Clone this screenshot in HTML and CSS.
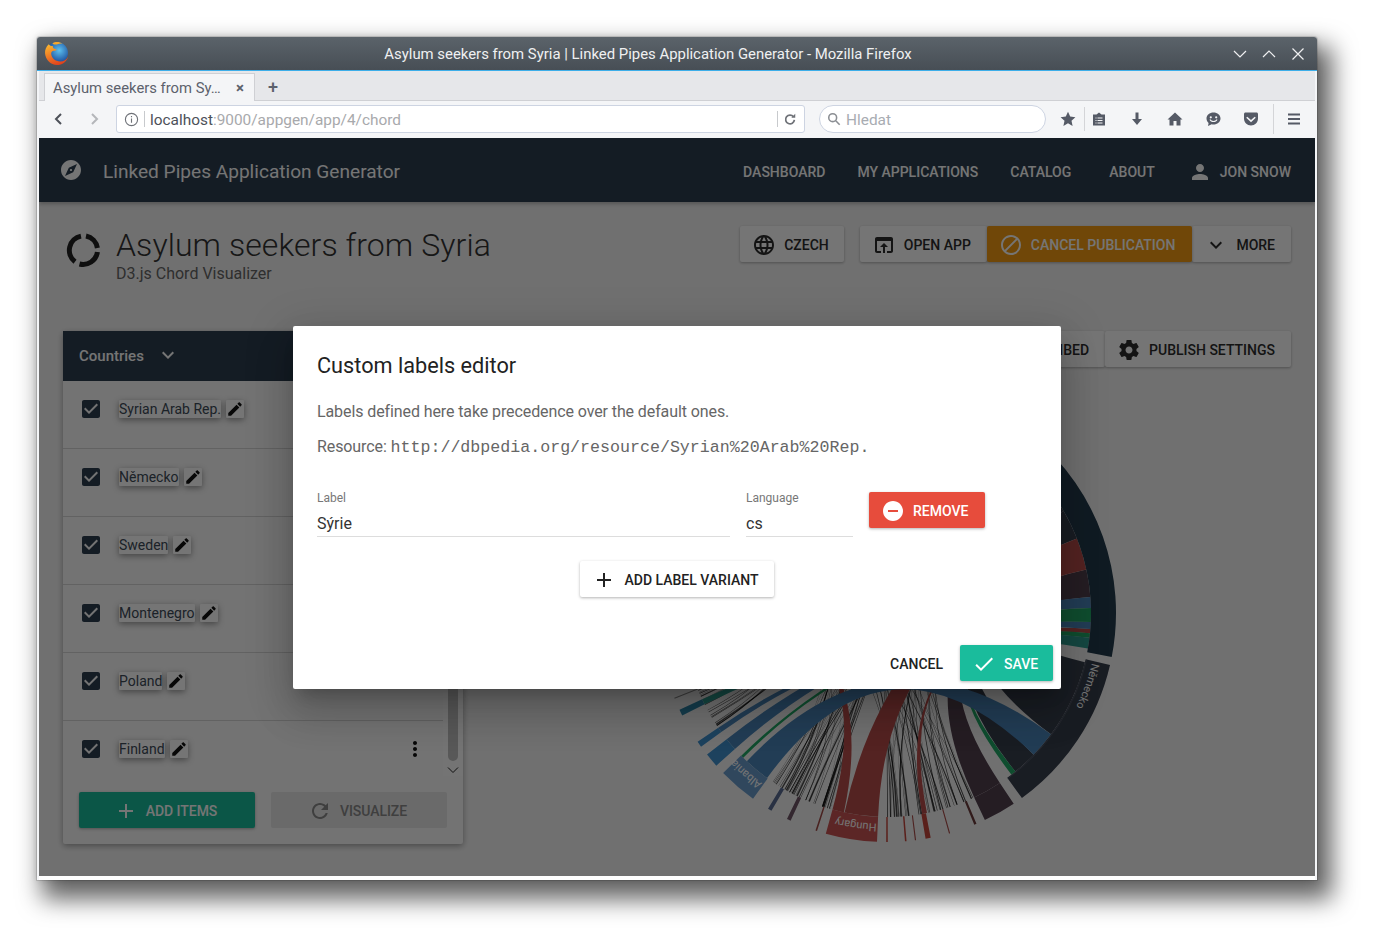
FILE: index.html
```html
<!DOCTYPE html>
<html lang="cs">
<head>
<meta charset="utf-8">
<title>Asylum seekers from Syria | Linked Pipes Application Generator - Mozilla Firefox</title>
<link rel="stylesheet" href="styles.css">
</head>
<body>
<svg class="defs" width="0" height="0" aria-hidden="true">
  <symbol id="i-globe" viewBox="0 0 24 24"><path d="M11.99 2C6.47 2 2 6.48 2 12s4.47 10 9.99 10C17.52 22 22 17.52 22 12S17.52 2 11.99 2zm6.93 6h-2.95c-.32-1.25-.78-2.45-1.38-3.56 1.84.63 3.37 1.91 4.33 3.56zM12 4.04c.83 1.2 1.48 2.53 1.91 3.96h-3.82c.43-1.43 1.08-2.76 1.91-3.96zM4.26 14C4.1 13.36 4 12.69 4 12s.1-1.36.26-2h3.38c-.08.66-.14 1.32-.14 2 0 .68.06 1.34.14 2H4.26zm.82 2h2.95c.32 1.25.78 2.45 1.38 3.56-1.84-.63-3.37-1.9-4.33-3.56zm2.95-8H5.08c.96-1.66 2.49-2.93 4.33-3.56C8.81 5.55 8.35 6.75 8.03 8zM12 19.96c-.83-1.2-1.48-2.53-1.91-3.96h3.82c-.43 1.43-1.08 2.76-1.91 3.96zM14.34 14H9.66c-.09-.66-.16-1.32-.16-2 0-.68.07-1.35.16-2h4.68c.09.65.16 1.32.16 2 0 .68-.07 1.34-.16 2zm.25 5.56c.6-1.11 1.06-2.31 1.38-3.56h2.95c-.96 1.65-2.49 2.93-4.33 3.56zM16.36 14c.08-.66.14-1.32.14-2 0-.68-.06-1.34-.14-2h3.38c.16.64.26 1.31.26 2s-.1 1.36-.26 2h-3.38z"/></symbol>
  <symbol id="i-open" viewBox="0 0 24 24"><path d="M19 4H5c-1.11 0-2 .9-2 2v12c0 1.1.89 2 2 2h4v-2H5V8h14v10h-4v2h4c1.1 0 2-.9 2-2V6c0-1.1-.89-2-2-2zm-7 6l-4 4h3v6h2v-6h3l-4-4z"/></symbol>
  <symbol id="i-block" viewBox="0 0 24 24"><path d="M12 2C6.48 2 2 6.48 2 12s4.48 10 10 10 10-4.48 10-10S17.52 2 12 2zM4 12c0-4.42 3.58-8 8-8 1.85 0 3.55.63 4.9 1.69L5.69 16.9C4.63 15.55 4 13.85 4 12zm8 8c-1.85 0-3.55-.63-4.9-1.69L18.31 7.1C19.37 8.45 20 10.15 20 12c0 4.42-3.58 8-8 8z"/></symbol>
  <symbol id="i-more" viewBox="0 0 24 24"><path d="M16.59 8.59L12 13.17 7.41 8.59 6 10l6 6 6-6z"/></symbol>
  <symbol id="i-gear" viewBox="0 0 24 24"><path d="M19.43 12.98c.04-.32.07-.64.07-.98s-.03-.66-.07-.98l2.11-1.65c.19-.15.24-.42.12-.64l-2-3.46c-.12-.22-.39-.3-.61-.22l-2.49 1c-.52-.4-1.08-.73-1.69-.98l-.38-2.65C14.46 2.18 14.25 2 14 2h-4c-.25 0-.46.18-.49.42l-.38 2.65c-.61.25-1.17.59-1.69.98l-2.49-1c-.23-.09-.49 0-.61.22l-2 3.46c-.13.22-.07.49.12.64l2.11 1.65c-.04.32-.07.65-.07.98s.03.66.07.98l-2.11 1.65c-.19.15-.24.42-.12.64l2 3.46c.12.22.39.3.61.22l2.49-1c.52.4 1.08.73 1.69.98l.38 2.65c.03.24.24.42.49.42h4c.25 0 .46-.18.49-.42l.38-2.65c.61-.25 1.17-.59 1.69-.98l2.49 1c.23.09.49 0 .61-.22l2-3.46c.12-.22.07-.49-.12-.64l-2.11-1.65zM12 15.5c-1.93 0-3.5-1.57-3.5-3.5s1.57-3.5 3.5-3.5 3.5 1.57 3.5 3.5-1.57 3.5-3.5 3.5z"/></symbol>
  <symbol id="i-edit" viewBox="0 0 24 24"><path d="M3 17.25V21h3.75L17.81 9.94l-3.75-3.75L3 17.25zM20.71 7.04c.39-.39.39-1.02 0-1.41l-2.34-2.34c-.39-.39-1.02-.39-1.41 0l-1.83 1.83 3.75 3.75 1.83-1.83z"/></symbol>
  <symbol id="i-add" viewBox="0 0 24 24"><path d="M19 13h-6v6h-2v-6H5v-2h6V5h2v6h6v2z"/></symbol>
  <symbol id="i-person" viewBox="0 0 24 24"><path d="M12 12c2.21 0 4-1.79 4-4s-1.79-4-4-4-4 1.79-4 4 1.79 4 4 4zm0 2c-2.67 0-8 1.34-8 4v2h16v-2c0-2.66-5.33-4-8-4z"/></symbol>
  <symbol id="i-check" viewBox="0 0 24 24"><path d="M9 16.17L4.83 12l-1.42 1.41L9 19 21 7l-1.41-1.41z"/></symbol>
  <symbol id="i-refresh" viewBox="0 0 24 24"><path d="M17.65 6.35C16.2 4.9 14.21 4 12 4c-4.42 0-7.99 3.58-7.99 8s3.57 8 7.99 8c3.73 0 6.84-2.55 7.73-6h-2.08c-.82 2.33-3.04 4-5.65 4-3.31 0-6-2.69-6-6s2.69-6 6-6c1.66 0 3.14.69 4.22 1.78L13 11h7V4l-2.35 2.35z"/></symbol>
  <symbol id="i-vert" viewBox="0 0 24 24"><path d="M12 8c1.1 0 2-.9 2-2s-.9-2-2-2-2 .9-2 2 .9 2 2 2zm0 2c-1.1 0-2 .9-2 2s.9 2 2 2 2-.9 2-2-.9-2-2-2zm0 6c-1.1 0-2 .9-2 2s.9 2 2 2 2-.9 2-2-.9-2-2-2z"/></symbol>
  <symbol id="i-remove" viewBox="0 0 24 24"><path d="M12 2C6.48 2 2 6.48 2 12s4.48 10 10 10 10-4.48 10-10S17.52 2 12 2zm5 11H7v-2h10v2z"/></symbol>
  <symbol id="i-compass" viewBox="0 0 24 24"><path d="M12 10.9c-.61 0-1.1.49-1.1 1.1s.49 1.1 1.1 1.1c.61 0 1.1-.49 1.1-1.1s-.49-1.1-1.1-1.1zM12 2C6.48 2 2 6.48 2 12s4.48 10 10 10 10-4.48 10-10S17.52 2 12 2zm2.19 12.19L6 18l3.81-8.19L18 6l-3.81 8.19z"/></symbol>
  <symbol id="i-box" viewBox="0 0 24 24"><path d="M19 3H5c-1.11 0-2 .9-2 2v14c0 1.1.89 2 2 2h14c1.11 0 2-.9 2-2V5c0-1.1-.89-2-2-2zm-9 14l-5-5 1.41-1.41L10 14.17l7.59-7.59L19 8l-9 9z"/></symbol>
</svg>

<div class="window">
  <div class="titlebar">
    <svg class="fx-logo" viewBox="0 0 24 24">
      <defs>
        <radialGradient id="fxb" cx="60%" cy="38%" r="55%"><stop offset="0" stop-color="#5cc0ee"/><stop offset="1" stop-color="#1d4f9e"/></radialGradient>
        <linearGradient id="fxo" x1="0.2" y1="0" x2="0.6" y2="1"><stop offset="0" stop-color="#fbb62f"/><stop offset="1" stop-color="#df3f1c"/></linearGradient>
      </defs>
      <circle cx="12.500" cy="11.500" r="10.500" fill="url(#fxb)"/>
      <path d="M4.500 3C2 5.300.8 8.400 1 11.800 1.400 18 6.400 23 12.500 23c5 0 9.400-3.300 10.700-8-1.500 2.800-4.300 4.600-7.600 4.600-4.700 0-8.400-3.300-8.700-7.400-.1-1.500.9-2.500 2.400-2.800 1.300-.2 2.400-.2 3-1-.9-.7-2-.8-2.900-1.300-.7-.4-.9-1.200-.9-2.200C7 4.700 5.200 4.300 4.500 3z" fill="url(#fxo)"/>
      <path d="M8 2.300C9.300 1.400 10.800 1 12.500 1c2 0 3.800.5 5.300 1.500-1.800-.2-3.400 0-4.800.6C11.300 3.800 9.500 3.500 8 2.300z" fill="#f7a72a"/>
    </svg>
    <span class="title-text">Asylum seekers from Syria | Linked Pipes Application Generator - Mozilla Firefox</span>
    <div class="win-controls">
      <svg viewBox="0 0 14 14"><path d="M1 4l6 6 6-6"/></svg>
      <svg viewBox="0 0 14 14"><path d="M1 10l6-6 6 6"/></svg>
      <svg viewBox="0 0 14 14"><path d="M1.500 1.500l11 11M12.500 1.500l-11 11"/></svg>
    </div>
  </div>

  <div class="tabbar">
    <div class="tab">
      <span class="tab-title">Asylum seekers from Sy…</span>
      <span class="tab-close">×</span>
    </div>
    <span class="tab-new">+</span>
  </div>

  <div class="navbar">
    <svg class="nav-arrow" viewBox="0 0 12 14"><path d="M9 2L4 7l5 5"/></svg>
    <svg class="nav-arrow off" viewBox="0 0 12 14"><path d="M3 2l5 5-5 5"/></svg>
    <div class="urlbar">
      <svg class="url-info" viewBox="0 0 16 16"><circle cx="8" cy="8" r="6.500"/><path d="M8 7v4.500M8 4.200v1.500"/></svg>
      <span class="url-sep"></span>
      <span class="url-text">localhost<span class="url-dim">:9000/appgen/app/4/chord</span></span>
      <span class="url-sep end"></span>
      <svg class="url-reload" viewBox="0 0 16 16"><path d="M12 5.500A5 5 0 1 0 13 9"/><path class="solid" d="M9.500 6.500H14V2z"/></svg>
    </div>
    <div class="searchbar">
      <svg class="search-ic" viewBox="0 0 16 16"><circle cx="6.500" cy="6.500" r="4.500"/><path d="M10 10l4.500 4.500"/></svg>
      <span>Hledat</span>
    </div>
    <div class="tools">
      <svg class="tool star" viewBox="0 0 16 16"><path d="M8 .8l2.200 4.800 5.200.6-3.900 3.500 1.100 5.200L8 12.300l-4.600 2.600 1.100-5.200L.6 6.200l5.200-.6z"/></svg>
      <span class="tool-sep"></span>
      <svg class="tool" viewBox="0 0 16 16"><path fill-rule="evenodd" d="M8 1.500l2.500 2H14v11H2v-11h3.500zM4.500 6.500v1h1v-1zm2 0v1h5v-1zm-2 2.500v1h1V9zm2 0v1h5V9zm-2 2.500v1h1v-1zm2 0v1h5v-1z"/></svg>
      <svg class="tool" viewBox="0 0 16 16"><path d="M6.500 1.500h3V8H13l-5 6-5-6h3.500z"/></svg>
      <svg class="tool" viewBox="0 0 16 16"><path d="M8 1.500L15.500 8.500H13.500V14.500H9.500V10H6.500V14.500H2.500V8.500H.5z"/></svg>
      <svg class="tool" viewBox="0 0 16 16"><path fill-rule="evenodd" d="M8.500 1.500c3.900 0 7 2.600 7 6s-3.100 6-7 6c-.6 0-1.200-.1-1.800-.2L3 15l.6-3.100C2.300 10.800 1.500 9.300 1.500 7.500c0-3.400 3.100-6 7-6zM5.800 5.200a1.100 1.100 0 1 0 0 2.200 1.100 1.100 0 0 0 0-2.200zm5.400 0a1.100 1.100 0 1 0 0 2.200 1.100 1.100 0 0 0 0-2.200zM4.500 8.700c.7 1.500 2.200 2.400 4 2.400s3.300-.9 4-2.400l-1-.4c-.6 1-1.700 1.700-3 1.700s-2.400-.7-3-1.700z"/></svg>
      <svg class="tool tool-last" viewBox="0 0 16 16"><path fill-rule="evenodd" d="M2.500 1.500h11c.8 0 1.500.7 1.500 1.500v4.500c0 3.900-3.100 7-7 7s-7-3.100-7-7V3c0-.8.700-1.500 1.500-1.500zM4.300 5.700L3.200 6.800 8 11.200l4.800-4.400-1.100-1.100L8 9z"/></svg>
      <span class="tool-sep tall"></span>
      <svg class="tool burger" viewBox="0 0 16 16"><path d="M2 2.500h12v2H2zM2 7h12v2H2zM2 11.500h12v2H2z"/></svg>
    </div>
  </div>

  <div class="app">
    <header class="appbar">
      <svg class="ic brand-ic"><use href="#i-compass"/></svg>
      <span class="brand">Linked Pipes Application Generator</span>
      <nav class="menu">
        <a class="menu-item m-dash">DASHBOARD</a>
        <a class="menu-item m-apps">MY APPLICATIONS</a>
        <a class="menu-item m-cat">CATALOG</a>
        <a class="menu-item m-about">ABOUT</a>
        <a class="menu-item m-user"><svg class="ic"><use href="#i-person"/></svg>JON SNOW</a>
      </nav>
    </header>

    <main class="page">
      <section class="head">
        <svg class="chord-logo" viewBox="0 0 34 34">
          <path d="M15 3.100A14.500 14.500 0 0 0 9 28.800"/>
          <path d="M13.500 31A14.500 14.500 0 0 0 31.400 19"/>
          <path d="M31.400 15A14.500 14.500 0 0 0 20 3"/>
        </svg>
        <div class="head-text">
          <h1>Asylum seekers from Syria</h1>
          <p>D3.js Chord Visualizer</p>
        </div>
        <div class="head-actions">
          <button class="btn btn-czech"><svg class="ic"><use href="#i-globe"/></svg>CZECH</button>
          <div class="btn-group">
            <button class="btn"><svg class="ic"><use href="#i-open"/></svg>OPEN APP</button>
            <button class="btn btn-amber"><svg class="ic"><use href="#i-block"/></svg>CANCEL PUBLICATION</button>
            <button class="btn"><svg class="ic"><use href="#i-more"/></svg>MORE</button>
          </div>
        </div>
      </section>

      <section class="main">
        <aside class="card">
          <div class="card-head">
            <span>Countries</span>
            <svg class="ic"><use href="#i-more"/></svg>
          </div>
          <div class="rows">
            <div class="row"><svg class="ic box"><use href="#i-box"/></svg><span class="chip">Syrian Arab Rep.</span><span class="chip-edit"><svg class="ic"><use href="#i-edit"/></svg></span></div>
            <div class="row"><svg class="ic box"><use href="#i-box"/></svg><span class="chip">Německo</span><span class="chip-edit"><svg class="ic"><use href="#i-edit"/></svg></span></div>
            <div class="row"><svg class="ic box"><use href="#i-box"/></svg><span class="chip">Sweden</span><span class="chip-edit"><svg class="ic"><use href="#i-edit"/></svg></span></div>
            <div class="row"><svg class="ic box"><use href="#i-box"/></svg><span class="chip">Montenegro</span><span class="chip-edit"><svg class="ic"><use href="#i-edit"/></svg></span></div>
            <div class="row"><svg class="ic box"><use href="#i-box"/></svg><span class="chip">Poland</span><span class="chip-edit"><svg class="ic"><use href="#i-edit"/></svg></span></div>
            <div class="row"><svg class="ic box"><use href="#i-box"/></svg><span class="chip">Finland</span><span class="chip-edit"><svg class="ic"><use href="#i-edit"/></svg></span><svg class="ic vert"><use href="#i-vert"/></svg></div>
            <div class="scroll-track">
              <span class="scroll-thumb"></span>
              <svg class="scroll-down" viewBox="0 0 12 8"><path d="M1 1.500l5 5 5-5"/></svg>
            </div>
          </div>
          <div class="card-actions">
            <button class="wide wide-add"><svg class="ic"><use href="#i-add"/></svg>ADD ITEMS</button>
            <button class="wide wide-off"><svg class="ic"><use href="#i-refresh"/></svg>VISUALIZE</button>
          </div>
        </aside>

        <div class="viz">
          <div class="viz-actions">
            <button class="btn">SUBSCRIBED</button>
            <button class="btn btn-publish"><svg class="ic"><use href="#i-gear"/></svg>PUBLISH SETTINGS</button>
          </div>
          <svg id="chord" class="chord" width="480" height="480" viewBox="-240 -240 480 480"></svg>
        </div>
      </section>
    </main>

    <div class="overlay">
      <div class="dialog">
        <h2>Custom labels editor</h2>
        <p class="dlg-line">Labels defined here take precedence over the default ones.</p>
        <p class="dlg-line res">Resource: <code>http://dbpedia.org/resource/Syrian%20Arab%20Rep.</code></p>
        <div class="variant">
          <label class="field f-label"><span>Label</span><b>Sýrie</b></label>
          <label class="field f-lang"><span>Language</span><b>cs</b></label>
          <button class="btn btn-red"><svg class="ic"><use href="#i-remove"/></svg>REMOVE</button>
        </div>
        <div class="add-row">
          <button class="btn btn-white"><svg class="ic"><use href="#i-add"/></svg>ADD LABEL VARIANT</button>
        </div>
        <div class="dlg-foot">
          <button class="link-btn">CANCEL</button>
          <button class="btn btn-teal"><svg class="ic"><use href="#i-check"/></svg>SAVE</button>
        </div>
      </div>
    </div>
  </div>
</div>
<script src="chord.js"></script>
</body>
</html>
```

FILE: styles.css
```css
* { box-sizing: border-box; }
html, body { margin: 0; height: 100%; background: #fff; overflow: hidden; }
body { font-family: Roboto, "Liberation Sans", sans-serif; padding: 37px 0 0 37px; }
.defs { position: absolute; }
button { font-family: inherit; border: 0; cursor: default; }
.ic { width: 24px; height: 24px; fill: currentColor; flex: none; display: block; }

.window { width: 1280px; height: 843px; display: flex; flex-direction: column; background: #fff; border: 2px solid #f4f5f7; border-top: 0; border-bottom: 0; border-radius: 3px 3px 0 0; box-shadow: 0 0 0 1px rgba(0,0,0,.12), 10px 14px 24px 5px rgba(0,0,0,.62), 0 0 6px rgba(0,0,0,.14); }

.titlebar { height: 34px; flex: none; margin: 0 -2px; background: linear-gradient(#5b636a, #474e55); border-bottom: 1px solid #3daee9; border-radius: 3px 3px 0 0; display: flex; align-items: center; justify-content: center; position: relative; color: #eff0f1; font-size: 14.900px; font-weight: 400; }
.fx-logo { position: absolute; left: 7px; top: 4px; width: 25px; height: 25px; }
.title-text { margin-right: 58px; }
.win-controls { position: absolute; right: 12px; top: 10px; display: flex; gap: 15px; }
.win-controls svg { width: 14px; height: 14px; fill: none; stroke: #eff0f1; stroke-width: 1.2; }

.tabbar { height: 30px; flex: none; background: #e6e7ea; border-bottom: 1px solid #cfd0d4; padding: 2px 0 0 5px; display: flex; align-items: stretch; }
.tab { width: 211px; margin-bottom: -1px; background: #f4f5f7; border: 1px solid #cfd0d4; border-bottom: 0; padding: 0 10px 0 8px; display: flex; align-items: center; justify-content: space-between; font-size: 14.800px; color: #5c616c; }
.tab-close { font-size: 15px; font-weight: 700; color: #5c616c; }
.tab-new { width: 36px; text-align: center; font-size: 18px; font-weight: 500; line-height: 27px; color: #5c616c; }

.navbar { height: 37px; flex: none; background: #f4f5f7; display: flex; align-items: center; padding: 0 0 1px 13px; }
.nav-arrow { width: 12px; height: 14px; fill: none; stroke: #4d5159; stroke-width: 2; flex: none; margin-right: 25px; }
.nav-arrow.off { stroke: #b4b6ba; margin-right: 15px; }
.urlbar { width: 689px; height: 28px; background: #fff; border: 1px solid #cdd4e2; border-radius: 3px; display: flex; align-items: center; padding-left: 7px; font-size: 15.400px; color: #4d5159; }
.url-info { width: 15px; height: 15px; fill: none; stroke: #6f7278; stroke-width: 1.200; flex: none; }
.url-sep { width: 1px; height: 16px; background: #c8cacd; margin: 0 5px 0 5px; flex: none; }
.url-text { flex: 1; white-space: nowrap; padding-top: 2px; }
.url-dim { color: #a8a9ac; }
.url-sep.end { margin: 0 5px 0 0; }
.url-reload { width: 14px; height: 14px; margin-right: 7px; fill: none; stroke: #6f7278; stroke-width: 2; flex: none; }
.url-reload .solid { fill: #6f7278; stroke: none; }
.searchbar { width: 227px; height: 28px; margin-left: 14px; background: #fff; border: 1px solid #cdd4e2; border-radius: 14px; display: flex; align-items: center; padding-left: 7px; gap: 5px; font-size: 15.400px; color: #a8acb2; }
.searchbar span { padding-top: 2px; }
.search-ic { width: 14px; height: 14px; fill: none; stroke: #8b8e93; stroke-width: 1.800; }
.tools { display: flex; align-items: center; margin-left: 14px; }
.tool { width: 16px; height: 16px; fill: #555a66; flex: none; margin-right: 22px; }
.tool.star { margin-right: 8px; }
.tool-sep { width: 1px; height: 24px; background: #d4d5d8; margin-right: 6px; }
.tool.tool-last { margin-right: 14px; }
.tool-sep.tall { height: 30px; margin: 0 12px 0 0; }
.tool.burger { margin-right: 0; }

.app { flex: 1; margin-bottom: 4px; position: relative; background: #f5f5f5; display: flex; flex-direction: column; overflow: hidden; }
.appbar { height: 64px; flex: none; background: #2c3e50; color: #fff; display: flex; align-items: center; padding: 0 24px 0 20px; box-shadow: 0 2px 4px rgba(0,0,0,.25); }
.brand-ic { width: 24px; height: 24px; margin-right: 20px; color: #fff; }
.brand { font-size: 19.100px; padding-top: 2px; }
.menu { margin-left: auto; display: flex; align-items: center; font-size: 14px; font-weight: 500; padding-top: 4px; }
.menu-item { display: flex; align-items: center; }
.m-apps { margin-left: 32px; }
.m-cat { margin-left: 32px; }
.m-about { margin-left: 38px; }
.m-user { margin-left: 33px; }
.m-user .ic { margin-right: 8px; }

.page { flex: 1; padding: 24px 24px 0; display: flex; flex-direction: column; }
.head { display: flex; height: 105px; flex: none; }
.chord-logo { width: 34px; height: 34px; margin: 7px 16px 0 3px; fill: none; stroke: #222; stroke-width: 5; flex: none; }
.head-text h1 { margin: 0; font-size: 32px; font-weight: 300; line-height: 38px; color: #333; letter-spacing: .08px; }
.head-text p { margin: 0; font-size: 16px; line-height: 20px; color: #666; }
.head-actions { margin-left: auto; display: flex; gap: 16px; align-items: flex-start; }
.btn-group { display: flex; }
.btn { height: 36px; padding: 2px 16px 0 12px; background: #fff; color: #2c2c2c; font-size: 14px; font-weight: 500; display: flex; align-items: center; gap: 8px; border-radius: 2px; box-shadow: 0 1px 3px rgba(0,0,0,.3); white-space: nowrap; }
.btn-czech { padding-right: 15px; }
.btn-amber { background: #f39c12; color: #fff; padding-right: 17px; position: relative; }

.main { display: flex; gap: 24px; flex: 1; align-items: flex-start; }
.card { width: 400px; flex: none; background: #fafafa; border-radius: 2px; box-shadow: 0 2px 6px rgba(0,0,0,.35); }
.card-head { height: 50px; background: #2c3e50; color: #fff; font-size: 15px; font-weight: 500; display: flex; align-items: center; padding-left: 16px; gap: 12px; }
.card-head .ic { margin-top: -2px; }
.rows { height: 395px; overflow: hidden; position: relative; }
.row { height: 68px; border-bottom: 1px solid #d5d5d5; padding: 16px 36px 0 16px; display: flex; align-items: flex-start; }
.box { color: #2c3e50; margin-right: 16px; }
.chip { height: 18px; margin-top: 3px; background: #fff; color: #3d4a57; font-size: 14px; line-height: 18px; box-shadow: 0 2px 6px rgba(0,0,0,.4); border-radius: 1px; }
.chip-edit { width: 18px; height: 18px; margin: 3px 0 0 5px; background: #fff; border-radius: 1px; box-shadow: 0 2px 6px rgba(0,0,0,.4); color: #111; display: flex; align-items: center; justify-content: center; }
.chip-edit .ic { width: 18px; height: 18px; }
.vert { margin: 0 0 0 auto; color: #111; }
.scroll-track { position: absolute; right: 0; top: 0; bottom: 0; width: 20px; background: #fcfcfc; display: flex; flex-direction: column; align-items: center; }
.scroll-thumb { width: 10px; flex: 1; margin-bottom: 15px; background: #c0c0c0; border-radius: 0 0 5px 5px; }
.scroll-down { position: absolute; bottom: 2px; width: 12px; height: 8px; fill: none; stroke: #222; stroke-width: 1; }
.card-actions { display: flex; gap: 16px; padding: 16px; }
.wide { flex: 1; height: 36px; border-radius: 2px; font-size: 14px; font-weight: 500; display: flex; align-items: center; justify-content: center; gap: 8px; padding: 2px 3px 0 0; letter-spacing: -.05px; }
.wide-add { background: #1abc9c; color: #fff; box-shadow: 0 1px 3px rgba(0,0,0,.3); }
.wide-off { background: #e6e6e6; color: #8a8a8a; }

.viz { flex: 1; min-width: 0; display: flex; flex-direction: column; }
.viz-actions { display: flex; justify-content: flex-end; }
.chord { margin: 6px 0 0 160px; display: block; flex: none; }

.overlay { position: absolute; inset: 0; background: rgba(0,0,0,.54); display: flex; align-items: center; justify-content: center; z-index: 5; }
.dialog { width: 768px; height: 363px; background: #fff; border-radius: 2px; box-shadow: 0 11px 15px -7px rgba(0,0,0,.2), 0 24px 38px 3px rgba(0,0,0,.14), 0 9px 46px 8px rgba(0,0,0,.12); padding: 24px; position: relative; display: flex; flex-direction: column; }
.dialog h2 { margin: 0; font-size: 21.700px; font-weight: 400; line-height: 32px; color: #222; }
.dlg-line { margin: 0; font-size: 16px; line-height: 24px; color: #666; margin-top: 18px; letter-spacing: -.1px; }
.dlg-line.res { margin-top: 11px; }
.dlg-line code { font-family: "Liberation Mono", monospace; font-size: 16.640px; letter-spacing: 0; }
.variant { display: flex; margin-top: 31px; align-items: flex-start; }
.field { display: flex; flex-direction: column; border-bottom: 1px solid #ddd; height: 46px; }
.field span { font-size: 12px; line-height: 14px; color: #777; }
.field b { font-size: 16px; font-weight: 400; line-height: 20px; margin-top: 9px; color: #333; }
.f-label { width: 413px; margin-right: 16px; }
.f-lang { width: 107px; margin-right: 16px; }
.btn-red { background: #e74c3c; color: #fff; width: 116px; margin-top: 1px; }
.btn-white { color: #222; padding-right: 15px; }
.add-row { display: flex; justify-content: center; margin-top: 24px; }
.dlg-foot { position: absolute; right: 8px; bottom: 8px; display: flex; align-items: center; gap: 17px; }
.link-btn { background: none; font-size: 14px; font-weight: 500; color: #222; padding: 2px 0 0; }
.btn-teal { background: #1abc9c; color: #fff; width: 93px; }
```

FILE: chord.js
```js
(function () {
  var svg = document.getElementById('chord');
  var NS = 'http://www.w3.org/2000/svg';
  var R0 = 204, R1 = 229;
  function pt(a, r) {
    var t = a * Math.PI / 180;
    return (r * Math.cos(t)).toFixed(2) + ' ' + (r * Math.sin(t)).toFixed(2);
  }
  function add(tag, attrs, parent) {
    var el = document.createElementNS(NS, tag);
    for (var k in attrs) el.setAttribute(k, attrs[k]);
    (parent || svg).appendChild(el);
    return el;
  }
  function arcSeg(a0, a1, r) {
    return 'A' + r + ' ' + r + ' 0 ' + (a1 - a0 > 180 ? 1 : 0) + ' 1 ' + pt(a1, r);
  }
  function ring(a0, a1, c) {
    add('path', { d: 'M' + pt(a0, R1) + arcSeg(a0, a1, R1) + 'L' + pt(a1, R0) + 'A' + R0 + ' ' + R0 + ' 0 0 0 ' + pt(a0, R0) + 'Z', fill: c });
  }
  function ribbon(a0, a1, b0, b1, c, op) {
    add('path', {
      d: 'M' + pt(a0, R0) + arcSeg(a0, a1, R0) + 'Q0 0 ' + pt(b0, R0) + arcSeg(b0, b1, R0) + 'Q0 0 ' + pt(a0, R0) + 'Z',
      fill: c, 'fill-opacity': op === undefined ? 1 : op
    });
  }

  var NAVY = '#233b4c', DARK = '#383f4e', PURPLE = '#523f4e', RED = '#b84e4a',
      BLUE = '#4a86ba', TICK = '#3f90cc', GREEN = '#22a866', TEAL = '#2f9d90';

  /* black hairlines, deterministic */
  var seed = 11;
  function rnd() { seed = (seed * 16807) % 2147483647; return seed / 2147483647; }
  var spans = [[65, 91, 46], [106, 125, 44], [143, 160, 22]];
  spans.forEach(function (s) {
    for (var i = 0; i < s[2]; i++) {
      var a = s[0] + rnd() * (s[1] - s[0]);
      var w = 0.06 + rnd() * rnd() * 0.5;
      var b = -150 + rnd() * 110;
      ribbon(a, a + w, b, b + 0.05 + rnd() * 0.3, '#000', 0.7);
    }
  });

  /* ribbons */
  ribbon(14, 36.5, -30, -21.4, DARK);
  ribbon(44, 51, -39, -30, DARK);
  ribbon(56.4, 64.7, -12.3, -4.5, PURPLE);
  ribbon(102.2, 105.5, 192, 193, RED);
  ribbon(92.5, 102, -21.4, -12.3, RED);
  ribbon(78.7, 80.1, 4.5, 5.7, RED);
  ribbon(51, 52.4, 5.7, 7, GREEN);
  ribbon(138.2, 141.8, -4.5, -1.4, BLUE);
  ribbon(144.3, 145.8, 2.5, 4.5, BLUE);
  ribbon(153.4, 155, 7, 10, TEAL);
  ribbon(134.8, 135.6, -1.4, 2.5, GREEN);
  ribbon(36.5, 44, 126, 133.4, BLUE);

  /* outer groups */
  ring(-50, 11.1, NAVY);
  ring(13.1, 53.9, DARK);
  ring(56.4, 64.7, PURPLE);
  ring(67, 67.6, '#6b3c3c');
  ring(74, 74.3, '#a84c48');
  ring(79, 80.3, '#c4463c');
  ring(82.7, 83, '#a84c48');
  ring(85.1, 85.5, '#c4463c');
  ring(89.8, 90.2, '#c4463c');
  ring(92.5, 105.5, '#c95453');
  ring(107.8, 108.2, '#a04a46');
  ring(114.9, 115.9, '#6f5566');
  ring(120.3, 121.3, '#5a6c93');
  ring(125.8, 135.7, '#6a9ccb');
  ring(138.2, 141.8, TICK);
  ring(144.3, 145.8, TICK);
  ring(153.4, 155, '#2f86a8');
  ring(158, 158.3, '#888');

  /* faint line at the ring's inner edge */
  add('path', { d: 'M' + pt(13.1, R0 + 1) + arcSeg(13.1, 53.9, R0 + 1), fill: 'none', stroke: '#5b6370', 'stroke-width': 0.6 });

  /* labels */
  [['Německo', 13.7], ['Hungary', 92.8], ['Albania', 126.2]].forEach(function (l, i) {
    var id = 'lab' + i;
    add('path', { id: id, d: 'M' + pt(l[1], 211) + arcSeg(l[1], l[1] + 45, 211), fill: 'none' });
    var t = add('text', { fill: '#fff', 'font-family': 'Roboto, sans-serif', 'font-size': 11 });
    var p = add('textPath', { href: '#' + id }, t);
    p.textContent = l[0];
  });
})();
```
